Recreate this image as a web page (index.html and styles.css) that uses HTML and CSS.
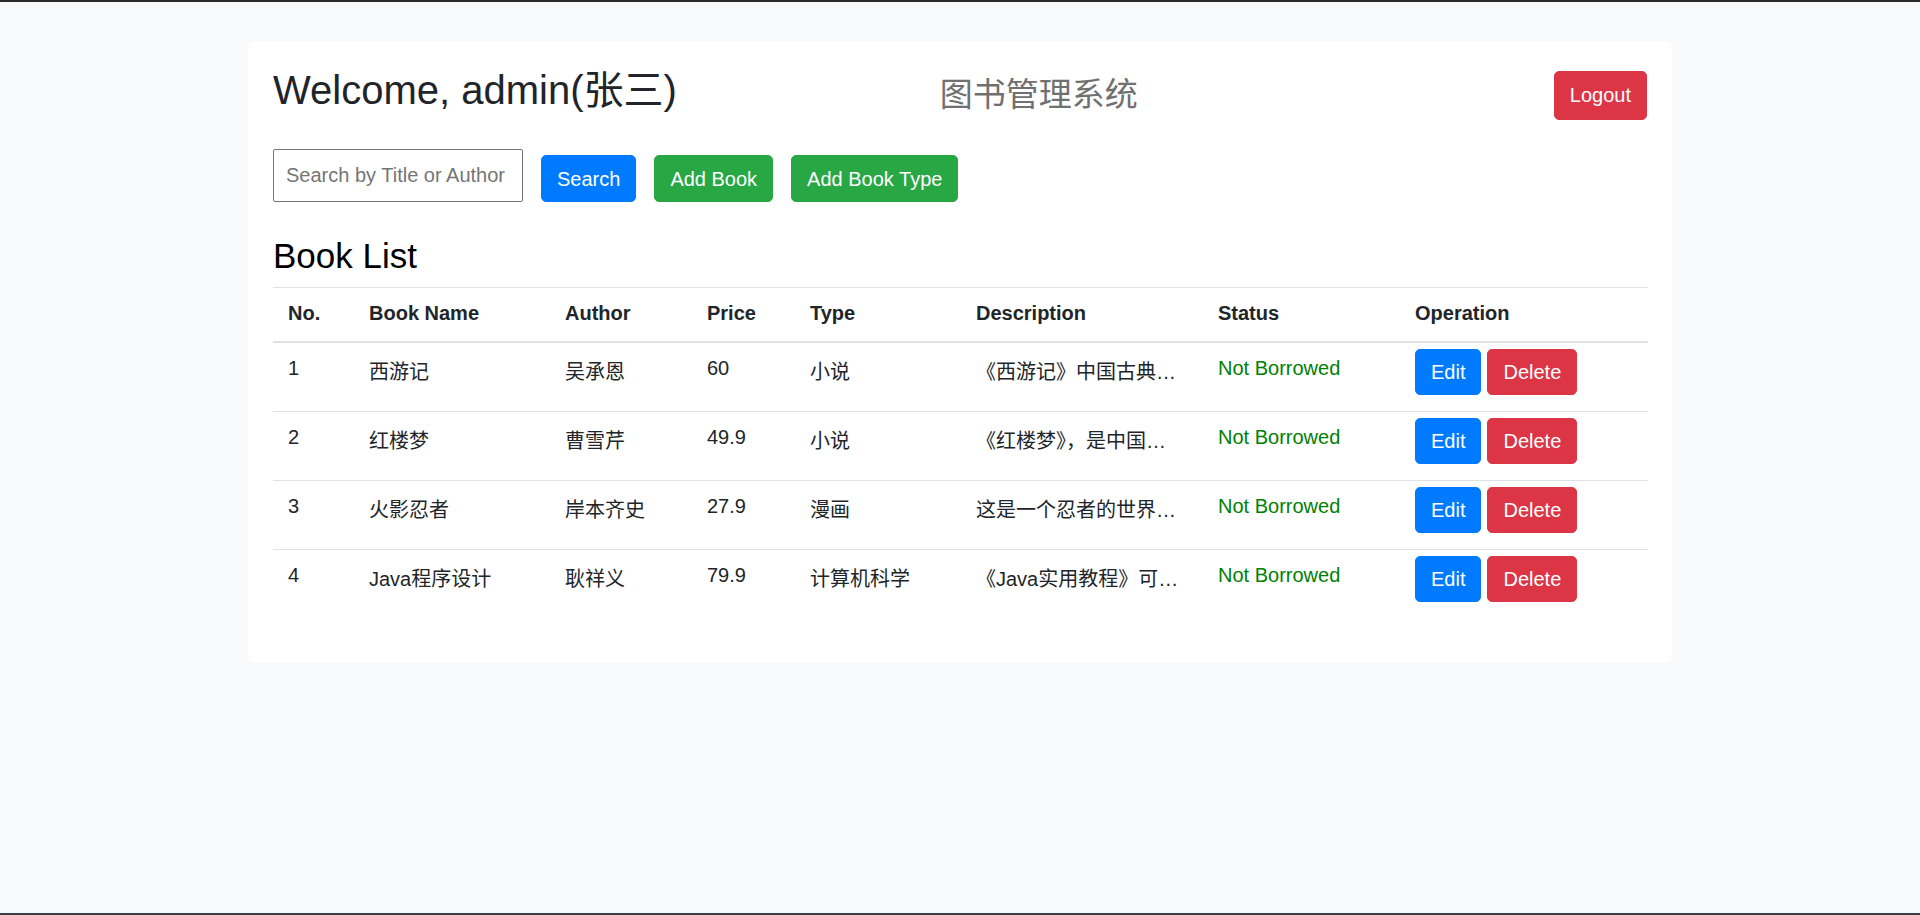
FILE: index.html
```html
<!DOCTYPE html>
<html lang="zh-CN">
<head>
<meta charset="utf-8">
<title>图书管理系统</title>
<link rel="stylesheet" href="styles.css">
</head>
<body>
<div class="page">
  <div class="topline"></div>
  <main class="main">
    <div class="card">
      <header class="header">
        <h2 class="welcome">Welcome, admin(张三)</h2>
        <h3 class="sys-title">图书管理系统</h3>
        <button class="btn btn-danger logout">Logout</button>
      </header>
      <div class="toolbar">
        <input class="search-input" type="text" placeholder="Search by Title or Author">
        <button class="btn btn-primary">Search</button>
        <button class="btn btn-success">Add Book</button>
        <button class="btn btn-success">Add Book Type</button>
      </div>
      <h3 class="list-title">Book List</h3>
      <table class="table">
        <colgroup>
          <col class="c-no"><col class="c-name"><col class="c-author"><col class="c-price">
          <col class="c-type"><col class="c-desc"><col class="c-status"><col class="c-op">
        </colgroup>
        <thead>
          <tr>
            <th>No.</th><th>Book Name</th><th>Author</th><th>Price</th><th>Type</th><th>Description</th><th>Status</th><th>Operation</th>
          </tr>
        </thead>
        <tbody>
          <tr>
            <td>1</td><td class="zh">西游记</td><td class="zh">吴承恩</td><td>60</td><td class="zh">小说</td>
            <td class="zh desc">《西游记》中国古典四大名著之一，是一部浪漫主义长篇神魔小说。</td>
            <td class="status">Not Borrowed</td>
            <td class="ops"><button class="btn btn-primary">Edit</button><button class="btn btn-danger">Delete</button></td>
          </tr>
          <tr>
            <td>2</td><td class="zh">红楼梦</td><td class="zh">曹雪芹</td><td>49.9</td><td class="zh">小说</td>
            <td class="zh desc">《红楼梦》，是中国古代章回体长篇小说，中国古典四大名著之一。</td>
            <td class="status">Not Borrowed</td>
            <td class="ops"><button class="btn btn-primary">Edit</button><button class="btn btn-danger">Delete</button></td>
          </tr>
          <tr>
            <td>3</td><td class="zh">火影忍者</td><td class="zh">岸本齐史</td><td>27.9</td><td class="zh">漫画</td>
            <td class="zh desc">这是一个忍者的世界，讲述了漩涡鸣人的成长故事。</td>
            <td class="status">Not Borrowed</td>
            <td class="ops"><button class="btn btn-primary">Edit</button><button class="btn btn-danger">Delete</button></td>
          </tr>
          <tr>
            <td>4</td><td class="zh">Java程序设计</td><td class="zh">耿祥义</td><td>79.9</td><td class="zh">计算机科学</td>
            <td class="zh desc">《Java实用教程》可作为高等院校计算机相关专业的教材。</td>
            <td class="status">Not Borrowed</td>
            <td class="ops"><button class="btn btn-primary">Edit</button><button class="btn btn-danger">Delete</button></td>
          </tr>
        </tbody>
      </table>
    </div>
  </main>
  <div class="bottomline"></div>
</div>
</body>
</html>
```
FILE: styles.css
```css
* { box-sizing: border-box; }
html, body { margin: 0; padding: 0; }
body {
  background: #f8f9fa;
  color: #212529;
  font-family: "Liberation Sans", "Noto Sans CJK SC", sans-serif;
  font-size: 20px;
  line-height: 1.5;
}
.page {
  min-height: 100vh;
  display: flex;
  flex-direction: column;
}
.topline { height: 2px; background: #2b2b2b; }
.bottomline { height: 2px; background: #3a3c48; }
.main { flex: 1; }
.card {
  width: 1424px;
  margin: 39px auto 0;
  background: #fff;
  border-radius: 6px;
  padding: 25px;
}
.header {
  display: flex;
  align-items: center;
  margin-bottom: 25px;
}
.welcome {
  margin: 0 0 10px;
  font-size: 40px;
  font-weight: 400;
  line-height: 1.2;
  color: #212529;
}
.sys-title {
  margin: 0 0 0 263px;
  font-size: 33px;
  font-weight: 400;
  line-height: 1.2;
  color: #707070;
}
.logout { margin-left: auto; }
.btn {
  display: inline-block;
  font-family: inherit;
  font-size: 20px;
  line-height: 30px;
  padding: 7.5px 15px;
  border: 1px solid transparent;
  border-radius: 5px;
  color: #fff;
  cursor: pointer;
}
.btn.logout { padding: 8.5px 15px; }
.btn-primary { background: #007bff; border-color: #007bff; }
.btn-success { background: #28a745; border-color: #28a745; }
.btn-danger { background: #dc3545; border-color: #dc3545; }
.toolbar {
  display: flex;
  align-items: flex-end;
  gap: 18px;
}
.search-input {
  width: 250px;
  height: 53px;
  padding: 0 12px;
  border: 1px solid #767676;
  border-radius: 2px;
  font-family: inherit;
  font-size: 20px;
  color: #212529;
}
.search-input::placeholder { color: #757575; }
.list-title {
  margin: 33px 0 10px;
  font-size: 35px;
  font-weight: 400;
  line-height: 1.2;
  color: #000;
}
.table {
  width: 100%;
  table-layout: fixed;
  border-collapse: separate;
  border-spacing: 0;
  margin-bottom: 20px;
}
.c-no { width: 81px; }
.c-name { width: 196px; }
.c-author { width: 142px; }
.c-price { width: 103px; }
.c-type { width: 166px; }
.c-desc { width: 242px; }
.c-status { width: 197px; }
.c-op { width: 248px; }
.table th {
  text-align: left;
  font-weight: 700;
  padding: 10px 15px 13px;
  border-top: 1px solid #dee2e6;
  border-bottom: 2px solid #dee2e6;
  vertical-align: top;
}
.table td {
  padding: 10px 15px;
  height: 68px;
  vertical-align: top;
  border-top: 1px solid #dee2e6;
  white-space: nowrap;
}
.table td.zh { padding-top: 14px; }
.table tbody tr:first-child td { border-top: 0; }
.table td.desc {
  padding-right: 22px;
  overflow: hidden;
  text-overflow: ellipsis;
}
.table td.status { color: green; }
.table td.ops {
  padding: 6px 15px 16px;
}
.ops .btn { padding: 7px 15px; }
.ops .btn + .btn { margin-left: 6px; }
```
